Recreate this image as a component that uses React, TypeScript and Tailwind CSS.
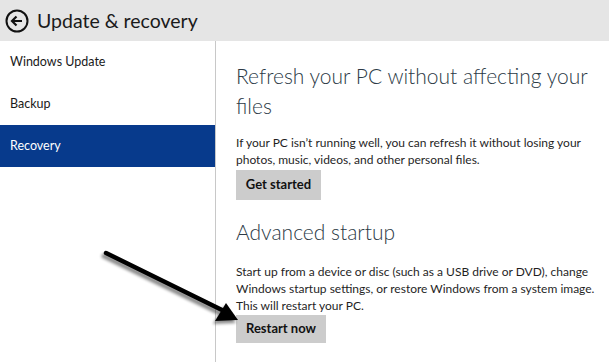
import React from 'react';

const font = { fontFamily: 'Lato, "Open Sans", sans-serif' };

const NavItem: React.FC<{ label: string; active?: boolean }> = ({ label, active }) => (
  <div
    className={
      'h-[42px] flex items-center pl-[10px] text-[12.5px] ' +
      (active ? 'bg-[#073a8c] text-white' : 'text-[#1a1a1a]')
    }
  >
    {label}
  </div>
);

const Arrow: React.FC = () => (
  <svg className="absolute left-0 top-0 pointer-events-none" width="609" height="362">
    <defs>
      <filter id="sh" x="-20%" y="-20%" width="140%" height="140%">
        <feGaussianBlur stdDeviation="1.6" />
      </filter>
    </defs>
    <g filter="url(#sh)" opacity="0.45" transform="translate(-2,3)">
      <line x1="106" y1="253" x2="222" y2="310" stroke="#000" strokeWidth="5" strokeLinecap="round" />
      <polygon points="238,320 215,321 226,303" fill="#000" />
    </g>
    <line x1="106" y1="253" x2="222" y2="310" stroke="#000" strokeWidth="4.5" strokeLinecap="round" />
    <polygon points="238,320 215,321 226,303" fill="#000" />
  </svg>
);

export default function App() {
  return (
    <div className="relative w-[609px] h-[362px] bg-white overflow-hidden" style={font}>
      <header className="h-[41px] bg-[#e5e5e5] flex items-center pl-[5px] gap-[8px]">
        <svg width="24" height="24" viewBox="0 0 24 24">
          <circle cx="12" cy="12" r="10.5" fill="none" stroke="#111" strokeWidth="2" />
          <path d="M17 12H7.5M11.5 7.5L7 12l4.5 4.5" fill="none" stroke="#111" strokeWidth="2.2" />
        </svg>
        <h1 className="text-[19.5px] text-[#1a1a1a] leading-none">Update &amp; recovery</h1>
      </header>
      <div className="flex h-[321px]">
        <nav className="w-[216px] border-r border-[#c8c8c8]">
          <NavItem label="Windows Update" />
          <NavItem label="Backup" />
          <NavItem label="Recovery" active />
        </nav>
        <main className="flex-1 pl-[20px] pt-[20px] text-[#1f1f1f]">
          <h2 className="text-[21px] leading-[30px] font-light text-[#2c3a46] w-[365px]">
            Refresh your PC without affecting your files
          </h2>
          <p className="mt-[13px] text-[12px] leading-[17px] w-[355px]">
            If your PC isn’t running well, you can refresh it without losing your photos, music, videos, and other
            personal files.
          </p>
          <button className="mt-[2px] w-[85px] h-[30px] bg-[#cccccc] text-[13px] font-bold text-[#111]">
            Get started
          </button>
          <h2 className="mt-[17px] text-[21px] leading-[30px] font-light text-[#2c3a46]">Advanced startup</h2>
          <p className="mt-[16px] text-[12px] leading-[17px] w-[370px]">
            Start up from a device or disc (such as a USB drive or DVD), change Windows startup settings, or restore
            Windows from a system image. This will restart your PC.
          </p>
          <button className="mt-[1px] w-[90px] h-[28px] bg-[#cccccc] text-[13px] font-bold text-[#111]">
            Restart now
          </button>
        </main>
      </div>
      <Arrow />
    </div>
  );
}
